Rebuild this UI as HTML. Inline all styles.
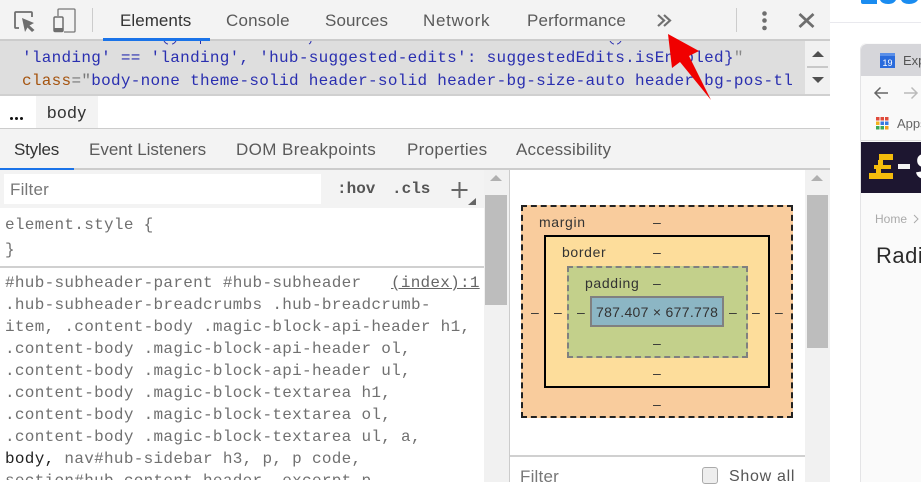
<!DOCTYPE html>
<html><head><meta charset="utf-8"><style>
html,body{margin:0;padding:0;background:#fff}
body{width:921px;height:482px;overflow:hidden;position:relative;font-family:"Liberation Sans",sans-serif}
div,span.a{position:absolute;white-space:nowrap}
.t{font-size:17px;color:#5a5a5a;line-height:22px}
.m{font-family:"Liberation Mono",monospace;font-size:16px;letter-spacing:.3px;line-height:22px;color:#707070}
.c{font-family:"Liberation Mono",monospace;font-size:16px;letter-spacing:.285px;line-height:22px;color:#2a2fb0}
.b{font-size:14px;line-height:16px;color:#333}
.l{letter-spacing:.65px}
</style></head><body>
<!-- toolbar -->
<div style="left:0;top:0;width:830px;height:39px;background:#f3f3f3"></div>
<div style="left:0;top:39px;width:830px;height:2px;background:#ccc"></div>
<svg style="position:absolute;left:0;top:0" width="830" height="40" fill="none">
<path d="M19 28H15.500Q15 28 15 27V13Q15 12 16 12H31Q32 12 32 13V17" stroke="#6e6e6e" stroke-width="1.800"/>
<path d="M22 18L34 23L29.500 25.500L34.500 30L32 32L27.500 27.500L25 32Z" fill="#6e6e6e"/>
<path d="M58 16V10Q58 9 59 9H74Q75 9 75 10V31Q75 32 74 32H64" stroke="#777" stroke-width="1.300"/>
<rect x="54" y="17" width="9" height="14.500" rx="1.200" stroke="#6e6e6e" stroke-width="1.500"/>
<rect x="54" y="28" width="9" height="4" fill="#6e6e6e"/>
<rect x="92" y="8" width="1" height="24" fill="#ccc"/>
<rect x="736" y="8" width="1" height="24" fill="#ccc"/>
<path d="M658 15L664 20.500L658 26M664 15L670 20.500L664 26" stroke="#707070" stroke-width="2.200"/>
<circle cx="764.500" cy="13.500" r="2.300" fill="#6e6e6e"/><circle cx="764.500" cy="20.500" r="2.300" fill="#6e6e6e"/><circle cx="764.500" cy="28" r="2.300" fill="#6e6e6e"/>
<path d="M799.500 14L813.500 27M813.500 14L799.500 27" stroke="#6e6e6e" stroke-width="2.800"/>
</svg>
<div class="t" style="left:120px;top:10px;color:#333;width:72px;letter-spacing:.05px">Elements</div>
<div class="t" style="left:226px;top:10px;letter-spacing:.2px">Console</div>
<div class="t" style="left:325px;top:10px;letter-spacing:.1px">Sources</div>
<div class="t" style="left:423px;top:10px;letter-spacing:.7px">Network</div>
<div class="t" style="left:527px;top:10px;letter-spacing:.15px">Performance</div>
<div style="left:103px;top:38px;width:107px;height:3px;background:#1a73e8"></div>
<!-- code -->
<div style="left:0;top:41px;width:805px;height:53px;background:#dedede;overflow:hidden">
<svg style="position:absolute;left:0;top:0" width="805" height="4" fill="none" stroke="#2a2fb0"><path d="M164 0Q166 3 168 3M176 0Q174 3 172 3M200.500 0V3M311 0Q311 2 309 3M610 0Q612 3 614 3M621 0Q619 3 617 3"/></svg>
<div class="c" style="left:22px;top:6px">'landing' == 'landing', 'hub-suggested-edits': suggestedEdits.isEnabled}<span style="color:#888">"</span></div>
<div class="c" style="left:22px;top:29px"><span style="color:#a5540f">class</span><span style="color:#777">=</span><span style="color:#777">"</span>body-none theme-solid header-solid header-bg-size-auto header-bg-pos-tl</div>
</div>
<div style="left:805px;top:41px;width:25px;height:53px;background:#f1f1f1"></div>
<div style="left:807px;top:66px;width:21px;height:2px;background:#c8c8c8"></div>
<svg style="position:absolute;left:805px;top:41px" width="25" height="53"><path d="M7 16L13 10L19 16Z" fill="#505050"/><path d="M7 36H19L13 42Z" fill="#505050"/></svg>
<div style="left:0;top:94px;width:830px;height:2px;background:#d0d0d0"></div>
<!-- breadcrumb -->
<div style="left:36px;top:96px;width:62px;height:32px;background:#f3f3f3"></div>
<div style="left:10px;top:117px;width:3px;height:3px;background:#111;box-shadow:5px 0 #111,10px 0 #111;border-radius:50%"></div>
<div class="t" style="left:47px;top:102px;color:#333;letter-spacing:.7px">body</div>
<div style="left:0;top:128px;width:830px;height:1px;background:#ccc"></div>
<!-- tabs -->
<div style="left:0;top:129px;width:830px;height:39px;background:#f3f3f3"></div>
<div style="left:0;top:168px;width:830px;height:2px;background:#ccc"></div>
<div style="left:0;top:168px;width:74px;height:2px;background:#1a73e8"></div>
<div class="t" style="left:14px;top:139px;color:#333;letter-spacing:-.2px">Styles</div>
<div class="t" style="left:89px;top:139px;letter-spacing:0">Event Listeners</div>
<div class="t" style="left:236px;top:139px;letter-spacing:.4px">DOM Breakpoints</div>
<div class="t" style="left:407px;top:139px;letter-spacing:.3px">Properties</div>
<div class="t" style="left:516px;top:139px;letter-spacing:.2px">Accessibility</div>
<!-- styles toolbar -->
<div style="left:0;top:170px;width:484px;height:38px;background:#f3f3f3"></div>
<div style="left:4px;top:174px;width:317px;height:30px;background:#fff"></div>
<div class="t" style="left:10px;top:179px;color:#777;letter-spacing:.2px">Filter</div>
<div class="m" style="left:337px;top:178px;font-weight:bold;color:#555;letter-spacing:0">:hov</div>
<div class="m" style="left:392px;top:178px;font-weight:bold;color:#555;letter-spacing:0">.cls</div>
<svg style="position:absolute;left:448px;top:179px" width="30" height="30"><path d="M3.500 11H19.500M11.500 3V19" stroke="#666" stroke-width="2"/><path d="M20 26L28 26L28 19Z" fill="#666"/></svg>
<!-- style rules -->
<div class="m" style="left:5px;top:214px">element.style {</div>
<div class="m" style="left:5px;top:239px">}</div>
<div style="left:0;top:266px;width:484px;height:2px;background:#d0d0d0"></div>
<div style="left:0;top:268px;width:484px;height:212px;overflow:hidden">
<div class="m" style="left:5px;top:4px">#hub-subheader-parent #hub-subheader</div>
<div class="m" style="left:391px;top:4px;letter-spacing:.25px;color:#666;text-decoration:underline">(index):1</div>
<div class="m" style="left:5px;top:26px">.hub-subheader-breadcrumbs .hub-breadcrumb-</div>
<div class="m" style="left:5px;top:48px">item, .content-body .magic-block-api-header h1,</div>
<div class="m" style="left:5px;top:70px">.content-body .magic-block-api-header ol,</div>
<div class="m" style="left:5px;top:92px">.content-body .magic-block-api-header ul,</div>
<div class="m" style="left:5px;top:114px">.content-body .magic-block-textarea h1,</div>
<div class="m" style="left:5px;top:136px">.content-body .magic-block-textarea ol,</div>
<div class="m" style="left:5px;top:158px">.content-body .magic-block-textarea ul, a,</div>
<div class="m" style="left:5px;top:180px"><span style="color:#222">body,</span> nav#hub-sidebar h3, p, p code,</div>
<div class="m" style="left:5px;top:202px">section#hub-content header .excerpt p</div>
</div>
<!-- left scrollbar -->
<div style="left:484px;top:170px;width:25px;height:312px;background:#f1f1f1"></div>
<div style="left:485px;top:195px;width:22px;height:110px;background:#bdbdbd"></div>
<svg style="position:absolute;left:484px;top:170px" width="25" height="20"><path d="M6 11L12 5L18 11Z" fill="#b0b0b0"/></svg>
<div style="left:509px;top:170px;width:1px;height:312px;background:#ccc"></div>
<!-- right pane scrollbar -->
<div style="left:805px;top:170px;width:25px;height:312px;background:#f1f1f1"></div>
<div style="left:807px;top:195px;width:21px;height:153px;background:#bdbdbd"></div>
<svg style="position:absolute;left:805px;top:170px" width="25" height="20"><path d="M6 11L12 5L18 11Z" fill="#b0b0b0"/></svg>
<!-- box model -->
<div style="left:521px;top:205px;width:268px;height:209px;background:#f9cc9d;border:2px dashed #222"></div>
<div style="left:544px;top:235px;width:222px;height:149px;background:#fddd9b;border:2px solid #000"></div>
<div style="left:567px;top:266px;width:177px;height:88px;background:#c3d08b;border:2px dashed #808080"></div>
<div style="left:590px;top:296px;width:130px;height:27px;background:#8cb6c4;border:2px solid #808080"></div>
<div class="b l" style="left:539px;top:214px">margin</div>
<div class="b l" style="left:562px;top:244px">border</div>
<div class="b l" style="left:585px;top:275px">padding</div>
<div class="b" style="left:596px;top:304px;color:#333;letter-spacing:.3px">787.407 × 677.778</div>
<div class="b" style="left:653px;top:214px">‒</div>
<div class="b" style="left:653px;top:244px">‒</div>
<div class="b" style="left:653px;top:275px">‒</div>
<div class="b" style="left:653px;top:335px">‒</div>
<div class="b" style="left:653px;top:365px">‒</div>
<div class="b" style="left:653px;top:396px">‒</div>
<div class="b" style="left:531px;top:304px">‒</div>
<div class="b" style="left:554px;top:304px">‒</div>
<div class="b" style="left:577px;top:304px">‒</div>
<div class="b" style="left:729px;top:304px">‒</div>
<div class="b" style="left:752px;top:304px">‒</div>
<div class="b" style="left:775px;top:304px">‒</div>
<div style="left:510px;top:455px;width:295px;height:2px;background:#d0d0d0"></div>
<div class="t" style="left:520px;top:466px;color:#777;letter-spacing:.2px">Filter</div>
<div style="left:702px;top:467px;width:14px;height:15px;background:#eee;border:1px solid #aaa;border-radius:3px"></div>
<div class="t" style="left:729px;top:466px;font-size:16px;color:#555;letter-spacing:.7px">Show all</div>
<!-- right page -->
<div style="left:830px;top:22px;width:91px;height:1px;background:#e9e9ee"></div>
<svg style="position:absolute;left:860px;top:0" width="61" height="5"><path d="M1 0V2Q1 4 3 4H17V0ZM20 0Q22 4 28 4T36 0ZM41 0Q43 4 49 4T58 0Z" fill="#1a8cf0"/></svg>
<div style="left:860px;top:43px;width:61px;height:439px;background:#fafafa;border-left:1px solid #e4e4e6;border-radius:7px 0 0 0;box-sizing:border-box"></div>
<div style="left:861px;top:44px;width:60px;height:32px;background:#d6d6da;border-radius:6px 0 0 0"></div>
<div style="left:861px;top:76px;width:60px;height:65px;background:#f9f9f9"></div>
<svg style="position:absolute;left:861px;top:44px" width="60" height="100" fill="none">
<rect x="19" y="9" width="15" height="15" fill="#2a6bdc"/><rect x="19" y="9" width="15" height="3" fill="#5a8fe8"/>
<text x="26.500" y="22" font-family="Liberation Sans" font-size="9" fill="#fff" text-anchor="middle">19</text>
<path d="M27 49H14M19.500 43.500L14 49L19.500 54.500" stroke="#666" stroke-width="1.500"/>
<path d="M43 49H56M50.500 43.500L56 49L50.500 54.500" stroke="#bbb" stroke-width="1.500"/>
<g><rect x="15" y="73" width="3.500" height="3.500" fill="#e04a3a"/><rect x="19.500" y="73" width="3.500" height="3.500" fill="#e04a3a"/><rect x="24" y="73" width="3.500" height="3.500" fill="#e04a3a"/>
<rect x="15" y="77.500" width="3.500" height="3.500" fill="#f2b01e"/><rect x="19.500" y="77.500" width="3.500" height="3.500" fill="#3a78e0"/><rect x="24" y="77.500" width="3.500" height="3.500" fill="#3a78e0"/>
<rect x="15" y="82" width="3.500" height="3.500" fill="#3aa856"/><rect x="19.500" y="82" width="3.500" height="3.500" fill="#3aa856"/><rect x="24" y="82" width="3.500" height="3.500" fill="#f2a01e"/></g>
</svg>
<div style="left:903px;top:53px;font-size:13px;line-height:16px;color:#555">Expl</div>
<div style="left:897px;top:116px;font-size:13px;line-height:16px;color:#666">Apps</div>
<div style="left:861px;top:140px;width:60px;height:1px;background:#ddd"></div>
<div style="left:861px;top:142px;width:60px;height:51px;background:#1d1630;overflow:hidden">
<svg style="position:absolute;left:0;top:0" width="40" height="51"><path d="M18 12H32V18H22V23H30V27H20V31H32V37H8V31H15V27H13V23H17V18H18Z" fill="#f4bc0c"/></svg>
<div style="left:37px;top:22px;width:12px;height:5px;background:#f4f4f4"></div>
<div style="left:54px;top:6px;font-size:36px;font-weight:bold;line-height:38px;color:#fff">S</div>
</div>
<div style="left:875px;top:212px;font-size:12px;line-height:14px;color:#aaa">Home</div>
<svg style="position:absolute;left:912px;top:212px" width="9" height="14"><path d="M2 3L6 7L2 11" stroke="#aaa" fill="none"/></svg>
<div style="left:876px;top:243px;font-size:22px;line-height:26px;letter-spacing:.5px;color:#2b2b2b">Radia</div>
<!-- arrow -->
<svg style="position:absolute;left:0;top:0" width="921" height="482"><path d="M668 34L699 51L689 56L711 100L680 62L672 68Z" fill="#f00000"/></svg>
</body></html>
